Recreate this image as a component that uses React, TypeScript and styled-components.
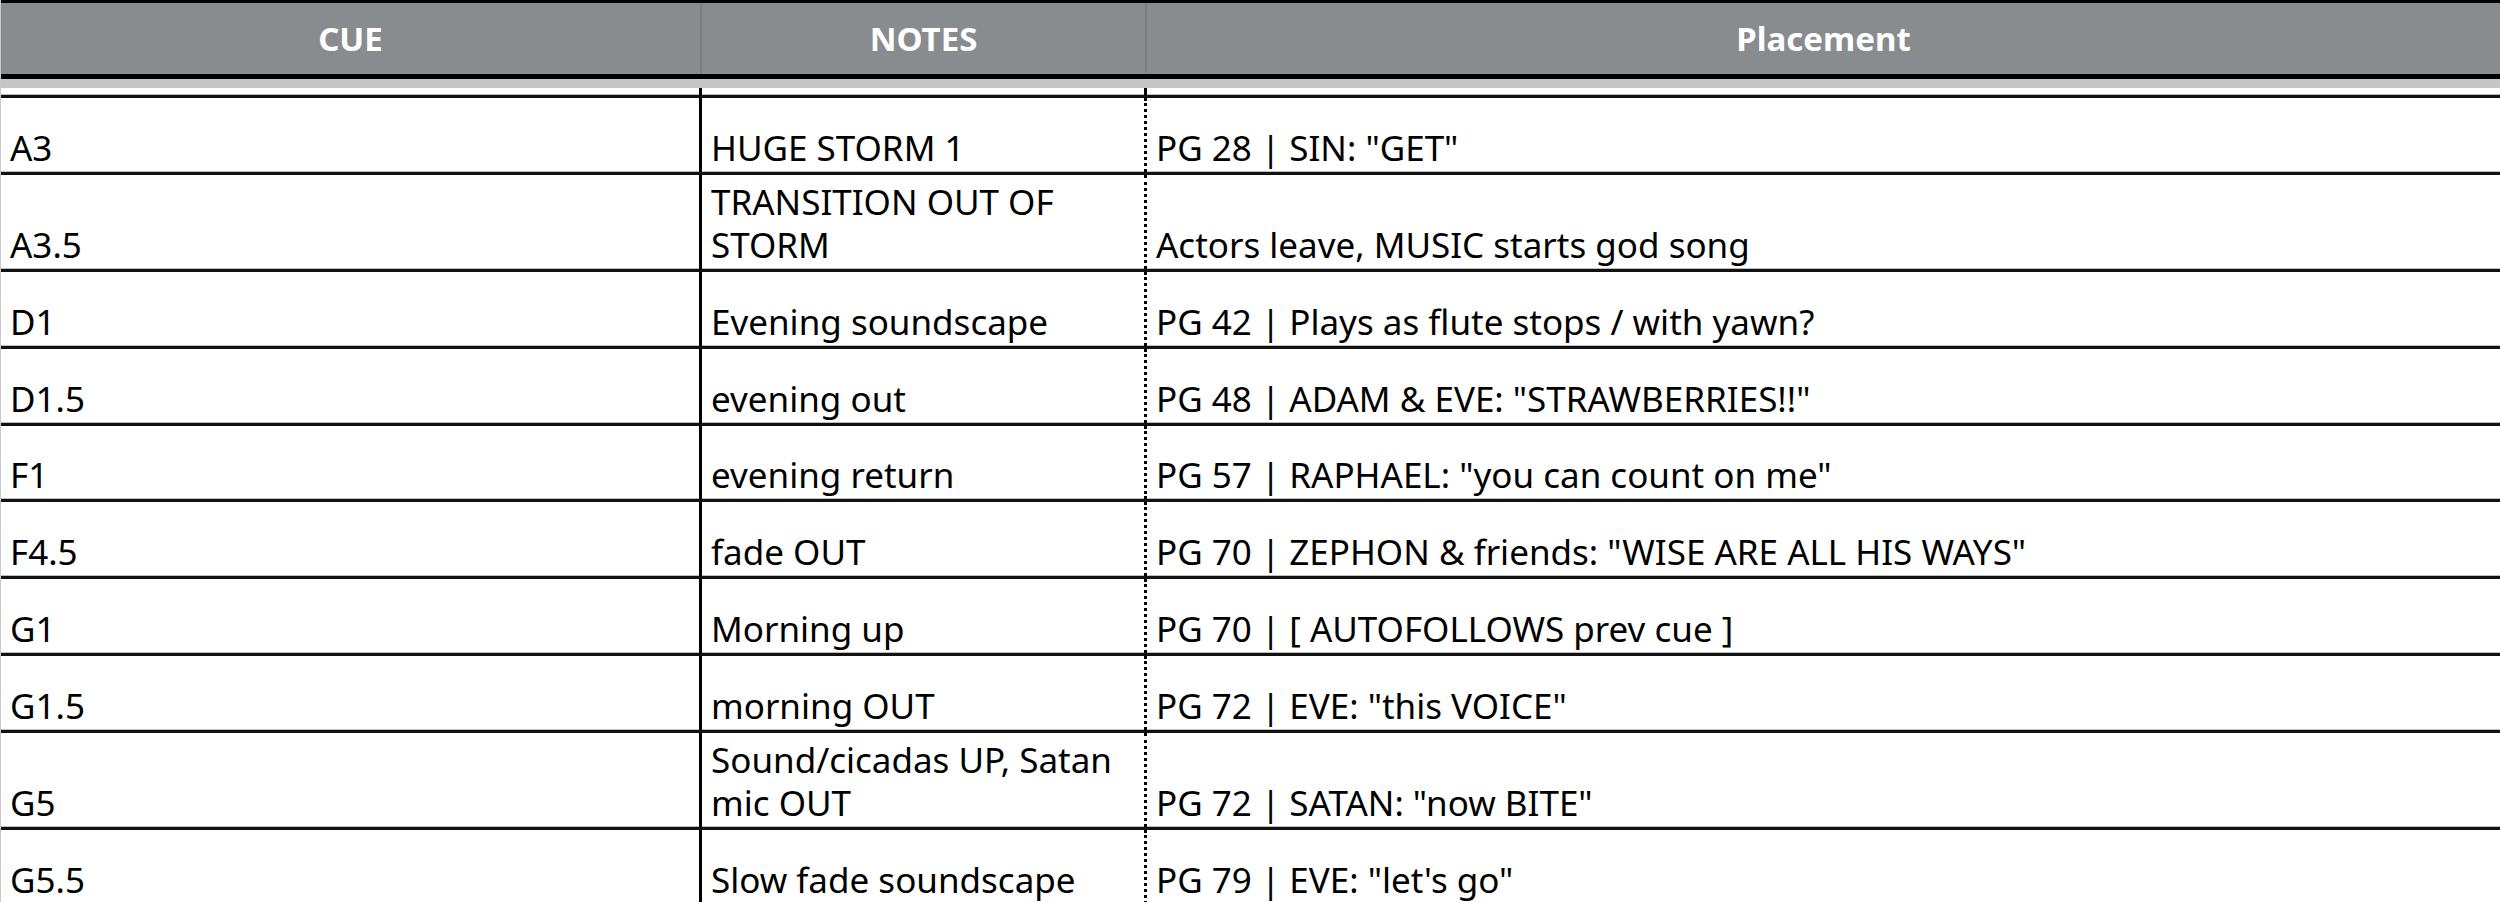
import * as React from 'react';
import styled, { createGlobalStyle } from 'styled-components';

interface Cue {
  cue: string;
  notes: string[];
  placement: string;
  tall?: boolean;
  height?: number;
}

const cues: Cue[] = [
  { cue: 'A3', notes: ['HUGE STORM 1'], placement: 'PG 28 | SIN: "GET"', height: 77 },
  { cue: 'A3.5', notes: ['TRANSITION OUT OF', 'STORM'], placement: 'Actors leave, MUSIC starts god song', tall: true },
  { cue: 'D1', notes: ['Evening soundscape'], placement: 'PG 42 | Plays as flute stops / with yawn?' },
  { cue: 'D1.5', notes: ['evening out'], placement: 'PG 48 | ADAM & EVE: "STRAWBERRIES!!"' },
  { cue: 'F1', notes: ['evening return'], placement: 'PG 57 | RAPHAEL: "you can count on me"' },
  { cue: 'F4.5', notes: ['fade OUT'], placement: 'PG 70 | ZEPHON & friends: "WISE ARE ALL HIS WAYS"' },
  { cue: 'G1', notes: ['Morning up'], placement: 'PG 70 | [ AUTOFOLLOWS prev cue ]' },
  { cue: 'G1.5', notes: ['morning OUT'], placement: 'PG 72 | EVE: "this VOICE"' },
  { cue: 'G5', notes: ['Sound/cicadas UP, Satan', 'mic OUT'], placement: 'PG 72 | SATAN: "now BITE"', tall: true },
  { cue: 'G5.5', notes: ['Slow fade soundscape'], placement: 'PG 79 | EVE: "let\'s go"' },
  { cue: '', notes: [''], placement: '' },
];

const GlobalStyle = createGlobalStyle`
  html, body {
    margin: 0;
    padding: 0;
    background: #fff;
    overflow: hidden;
  }

  body {
    font-family: "Noto Sans", "Open Sans", sans-serif;
    color: #000;
  }
`;

const Sheet = styled.div`
  width: 2500px;
  height: 902px;
  overflow: hidden;
  box-sizing: border-box;
  border-left: 1px solid #c8c8c8;
`;

const HeaderBar = styled.div`
  display: grid;
  grid-template-columns: 701px 445px 1fr;
  height: 71px;
  background: #898c8e;
  border-top: 3px solid #000;
  border-bottom: 5px solid #000;
`;

const HeaderCell = styled.div<{ $last?: boolean }>`
  display: flex;
  align-items: center;
  justify-content: center;
  font-size: 33px;
  font-weight: 700;
  color: #fff;
  border-right: ${p => (p.$last ? 'none' : '2px solid #7c7f82')};
`;

const Band = styled.div`
  height: 9px;
  background: #c6c6c6;
`;

const Row = styled.div<{ $height: number }>`
  display: grid;
  grid-template-columns: 701px 445px 1fr;
  height: ${p => p.$height}px;
  box-sizing: border-box;
  border-top: 3px solid #111;
  box-shadow: 0 -1px 0 #bdbdbd;
`;

const Gap = styled(Row)`
  border-top: none;
  box-shadow: none;
`;

const Cell = styled.div<{ $divider?: 'solid' | 'dotted' }>`
  display: flex;
  flex-direction: column;
  justify-content: flex-end;
  padding: 0 9px 3px;
  font-size: 35px;
  line-height: 43px;
  white-space: nowrap;
  overflow: hidden;
  border-right: ${p =>
    p.$divider === 'solid' ? '3px solid #000' : p.$divider === 'dotted' ? '3px dotted #000' : 'none'};
`;

export default function App() {
  return (
    <>
      <GlobalStyle />
      <Sheet>
        <HeaderBar>
          <HeaderCell>CUE</HeaderCell>
          <HeaderCell>NOTES</HeaderCell>
          <HeaderCell $last>Placement</HeaderCell>
        </HeaderBar>
        <Band />
        <Gap $height={7}>
          <Cell $divider="solid" />
          <Cell $divider="dotted" />
          <Cell />
        </Gap>
        {cues.map((c, i) => (
          <Row key={i} $height={c.height || (c.tall ? 97 : 76.8)}>
            <Cell $divider="solid">{c.cue}</Cell>
            <Cell $divider="dotted">
              {c.notes.map((line, j) => (
                <span key={j}>{line}</span>
              ))}
            </Cell>
            <Cell>{c.placement}</Cell>
          </Row>
        ))}
      </Sheet>
    </>
  );
}
